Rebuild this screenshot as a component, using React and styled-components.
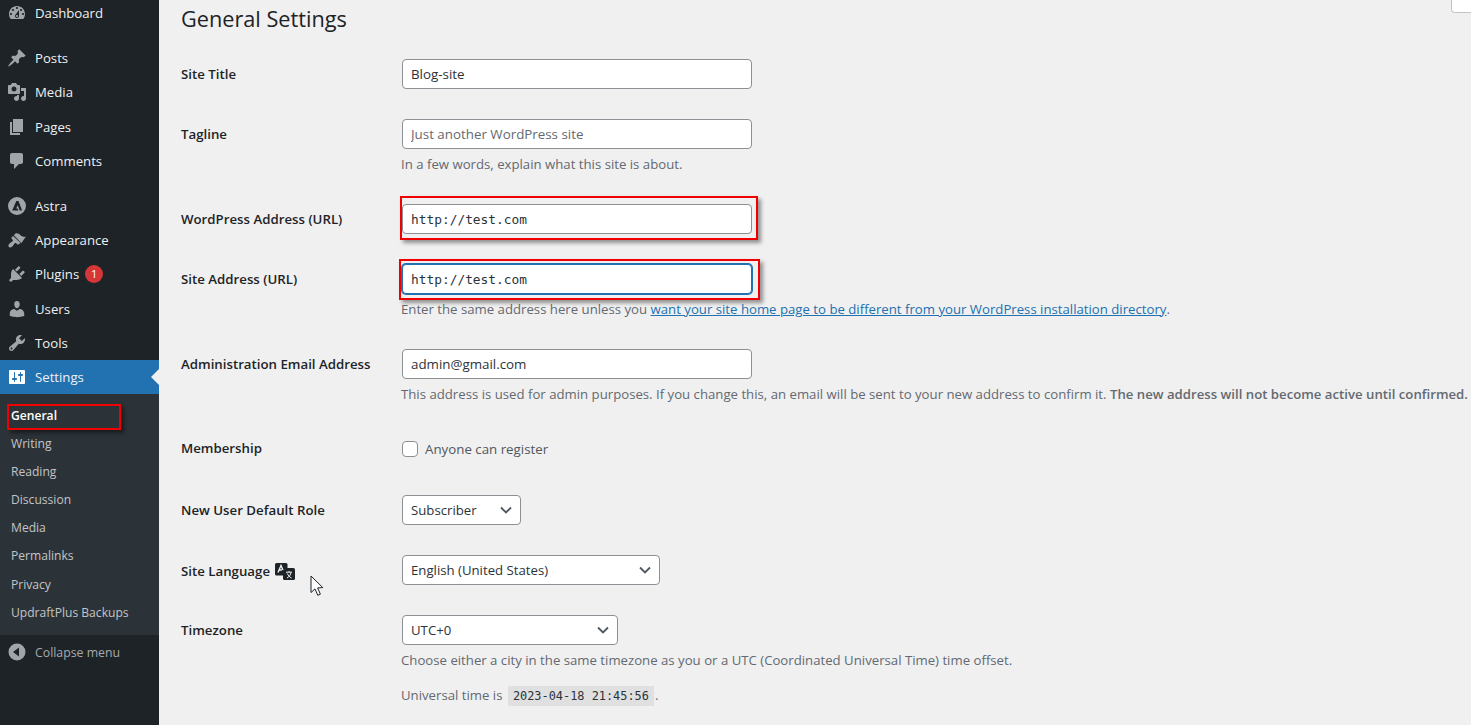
import styled, { createGlobalStyle } from "styled-components";

const GlobalStyle = createGlobalStyle`
  html, body {
    margin: 0;
    height: 725px;
    overflow: hidden;
    background: #f0f0f0;
    font-family: "Open Sans", "Noto Sans", sans-serif;
  }
  * { box-sizing: border-box; }
`;

const Page = styled.div`
  display: flex;
  height: 725px;
  overflow: hidden;
  position: relative;
`;

const Sidebar = styled.nav`
  width: 159px;
  flex-shrink: 0;
  background: #1d2327;
  overflow: hidden;
`;

const MenuList = styled.div`
  margin-top: -4.2px;
`;

const MenuRow = styled.div`
  height: 34.3px;
  display: flex;
  align-items: center;
  position: relative;
  padding-left: 7px;
  gap: 8px;
  font-size: 13.2px;
  color: #f0f0f1;
  background: ${({ $active }) => ($active ? "#2271b1" : "transparent")};
  margin-top: ${({ $gap }) => ($gap ? "10.7px" : "0")};
  svg { flex-shrink: 0; fill: ${({ $active }) => ($active ? "#fff" : "#a0a5aa")}; }
`;

const ActiveArrow = styled.span`
  position: absolute;
  right: 0;
  top: 50%;
  margin-top: -8px;
  border: 8px solid transparent;
  border-right-color: #f0f0f0;
  border-left-width: 0;
`;

const Badge = styled.span`
  width: 18px;
  height: 18px;
  border-radius: 50%;
  background: #d63638;
  color: #fff;
  font-size: 11px;
  line-height: 18px;
  text-align: center;
  margin-left: -2px;
`;

const SubMenu = styled.div`
  background: #2c3338;
  padding: 7.3px 0 8px 11px;
`;

const SubItem = styled.div`
  height: 28.15px;
  line-height: 28px;
  font-size: 12.1px;
  color: ${({ $current }) => ($current ? "#fff" : "#c3c4c7")};
  font-weight: ${({ $current }) => ($current ? 600 : 400)};
  position: relative;
`;

const SubMark = styled.span`
  position: absolute;
  left: -4px;
  top: 2px;
  width: 114px;
  height: 26px;
  border: 2.5px solid #f00000;
  box-shadow: 3px 3px 4px rgba(0, 0, 0, 0.45);
`;

const CollapseRow = styled(MenuRow)`
  font-size: 12.3px;
  color: #a7aaad;
`;

const Main = styled.main`
  flex: 1;
  padding-left: 22px;
  min-width: 0;
`;

const Heading = styled.h1`
  margin: 0 0 8px;
  height: 36px;
  line-height: 38px;
  font-size: 21.7px;
  font-weight: 400;
  color: #1d2327;
`;

const Row = styled.div`
  display: grid;
  grid-template-columns: 221px 1fr;
  padding: 15px 0;
`;

const Label = styled.div`
  display: flex;
  align-items: center;
  height: 30px;
  gap: 5px;
  padding-top: ${({ $down }) => ($down ? "2px" : "0")};
  padding-bottom: ${({ $up }) => ($up ? "2px" : "0")};
  font-size: 13.25px;
  font-weight: 600;
  color: #1d2327;
`;

const Control = styled.div`
  min-width: 0;
  font-size: 13.3px;
  color: #2c3338;
`;

const Wrap = styled.div`
  position: relative;
  width: ${({ $w }) => $w}px;
  height: 30px;
`;

const Input = styled.input`
  display: block;
  width: 350px;
  height: 30px;
  padding: 0 8px;
  background: #fff;
  border: 1px solid ${({ $focus }) => ($focus ? "#2271b1" : "#8c8f94")};
  border-radius: 4px;
  box-shadow: ${({ $focus }) => ($focus ? "0 0 0 1px #2271b1" : "none")};
  outline: none;
  color: #2c3338;
  font-family: ${({ $mono }) => ($mono ? '"DejaVu Sans Mono", monospace' : "inherit")};
  font-size: ${({ $mono }) => ($mono ? "12.85px" : "13.35px")};
  &::placeholder { color: #646970; opacity: 1; }
`;

const Mark = styled.span`
  position: absolute;
  border: 2.5px solid #f00000;
  box-shadow: 3px 3px 4px rgba(0, 0, 0, 0.4);
  pointer-events: none;
  left: ${({ $l }) => $l}px;
  right: ${({ $r }) => $r}px;
  top: ${({ $t }) => $t}px;
  bottom: ${({ $b }) => $b}px;
`;

const Select = styled.select`
  appearance: none;
  display: block;
  width: 100%;
  height: 30px;
  padding: 0 24px 0 8px;
  background: #fff;
  border: 1px solid #8c8f94;
  border-radius: 4px;
  color: #2c3338;
  font-family: inherit;
  font-size: 13.2px;
`;

const Chevron = styled.svg`
  position: absolute;
  right: 8px;
  top: 10px;
  pointer-events: none;
`;

const Desc = styled.p`
  margin: ${({ $big }) => ($big ? "15px" : "5px")} 0 0 -1px;
  line-height: 20px;
  font-size: 13.2px;
  color: #646970;
  white-space: nowrap;
`;

const Link = styled.a`
  color: #2271b1;
  text-decoration: underline;
`;

const Strong = styled.strong`
  font-weight: 600;
`;

const CheckLine = styled.label`
  display: flex;
  align-items: flex-start;
  height: 31px;
  padding-top: 5px;
  gap: 7px;
  line-height: 20px;
  color: #50575e;
`;

const Checkbox = styled.span`
  width: 16px;
  height: 16px;
  margin-top: 2px;
  background: #fff;
  border: 1px solid #8c8f94;
  border-radius: 4px;
`;

const Code = styled.code`
  display: inline-block;
  height: 20px;
  line-height: 20px;
  padding: 0 5px;
  margin: 0 1px 0 2px;
  background: #e0e0e0;
  color: #2c3338;
  font-family: "DejaVu Sans Mono", monospace;
  font-size: 11.9px;
`;

const HelpTab = styled.div`
  position: absolute;
  right: 0;
  top: -2px;
  width: 20px;
  height: 15px;
  background: #fff;
  border-left: 1px solid #c3c4c7;
  border-bottom: 1px solid #c3c4c7;
  border-bottom-left-radius: 4px;
`;

const Cursor = styled.svg`
  position: absolute;
  left: 310px;
  top: 575px;
`;

const Icon = ({ d }) => (
  <svg width="20" height="20" viewBox="0 0 20 20">
    <path d={d} />
  </svg>
);

const icons = {
  dashboard:
    "M3.76 16h12.48c1.1-1.37 1.76-3.11 1.76-5 0-4.42-3.58-8-8-8s-8 3.58-8 8c0 1.89.66 3.63 1.76 5zM10 4c.55 0 1 .45 1 1s-.45 1-1 1-1-.45-1-1 .45-1 1-1zM6 6c.55 0 1 .45 1 1s-.45 1-1 1-1-.45-1-1 .45-1 1-1zm8 0c.55 0 1 .45 1 1s-.45 1-1 1-1-.45-1-1 .45-1 1-1zm-5.37 5.55L12 7v6c0 1.1-.9 2-2 2s-2-.9-2-2c0-.57.24-1.08.63-1.45zM4 10c.55 0 1 .45 1 1s-.45 1-1 1-1-.45-1-1 .45-1 1-1zm12 0c.55 0 1 .45 1 1s-.45 1-1 1-1-.45-1-1 .45-1 1-1zm-5 3c0-.55-.45-1-1-1s-1 .45-1 1 .45 1 1 1 1-.45 1-1z",
  posts:
    "M10.44 3.02l1.82-1.82 6.36 6.35-1.83 1.82c-1.05-.68-2.48-.57-3.41.36l-.75.75c-.92.93-1.04 2.35-.35 3.41l-1.83 1.82-2.41-2.41-2.8 2.79c-.42.42-3.38 2.71-3.8 2.29s1.86-3.39 2.28-3.81l2.79-2.79L4.1 9.36l1.83-1.82c1.05.69 2.48.57 3.4-.36l.75-.75c.93-.92 1.05-2.35.36-3.41z",
  media:
    "M13 11V4c0-.55-.45-1-1-1h-1.67L9 1H5L3.67 3H2c-.55 0-1 .45-1 1v7c0 .55.45 1 1 1h10c.55 0 1-.45 1-1zM7 4.5c1.38 0 2.5 1.12 2.5 2.5S8.38 9.5 7 9.5 4.5 8.38 4.5 7 5.62 4.5 7 4.5zM14 6h5v10.5c0 1.38-1.12 2.5-2.5 2.5S14 17.88 14 16.5s1.12-2.5 2.5-2.5c.17 0 .34.02.5.05V9h-3V6zm-4 8.05V13h2v3.5c0 1.38-1.12 2.5-2.5 2.5S7 17.88 7 16.5 8.12 14 9.5 14c.17 0 .34.02.5.05z",
  pages: "M6 15V2h10v13H6zm-1 1h8v2H3V5h2v11z",
  comments:
    "M5 2h9c1.1 0 2 .9 2 2v7c0 1.1-.9 2-2 2h-2l-5 5v-5H5c-1.1 0-2-.9-2-2V4c0-1.1.9-2 2-2z",
  astra:
    "M10 1a9 9 0 1 0 0 18 9 9 0 0 0 0-18zM9.3 5h2.2l3.6 9.4h-2.4l-1.9-5.2-1.7 3.4h1.6l.7 1.8H5.2z",
  appearance:
    "M19 6.6c-1.9.7-3.2.2-4.4-.5-1.3-.8-1.7-1.6-2.9-2.3-1.2-.7-2.6-.8-3.2-.2L6.8 5.3l7.6 7.6zM6 6L4.7 7.3c-.4.4-.4 1 0 1.4l1 1c.4.4.4 1 0 1.4-.6.6-1.4 1.1-2.2 1.7-.4.3-.7.5-1 .8-1.2 1.2-1.4 2.6-.6 3.4.8.8 2.2.6 3.4-.6.3-.3.6-.7.8-1 .6-.8 1.1-1.6 1.7-2.2.4-.4 1-.4 1.4 0l1 1c.4.4 1 .4 1.4 0l2.1-1.1z",
  plugins:
    "M13.11 4.36L9.87 7.6 8 5.73l3.24-3.24c.35-.34 1.05-.2 1.56.32.52.51.66 1.21.31 1.55zm-8 1.77l.91-1.12 9.01 9.01-1.19.84c-.71.71-2.63 1.16-3.82 1.16H6.14L4.9 17.26c-.59.59-1.54.59-2.12 0-.59-.58-.59-1.53 0-2.12l1.24-1.24v-3.88c0-1.13.4-3.19 1.09-3.89zm7.26 3.97l3.24-3.24c.34-.35 1.04-.21 1.55.31.52.51.66 1.21.31 1.55l-3.24 3.25z",
  users:
    "M10 9.25c-2.27 0-2.73-3.44-2.73-3.44C7 4.02 7.82 2 9.97 2c2.16 0 2.98 2.02 2.71 3.81 0 0-.41 3.44-2.68 3.44zm0 2.57L12.72 10c2.39 0 4.52 2.33 4.52 4.53v2.49s-3.65 1.13-7.24 1.13c-3.65 0-7.24-1.13-7.24-1.13v-2.49c0-2.25 1.94-4.48 4.47-4.48z",
  tools:
    "M16.68 9.77c-1.34 1.34-3.3 1.67-4.95.99l-5.41 6.52c-.99.99-2.59.99-3.58 0s-.99-2.59 0-3.57l6.52-5.42c-.68-1.65-.35-3.61.99-4.95 1.28-1.28 3.12-1.62 4.72-1.06l-2.89 2.89 2.82 2.82 2.86-2.87c.53 1.58.18 3.39-1.08 4.65zM3.81 16.21c.4.39 1.04.39 1.43 0 .4-.4.4-1.04 0-1.43-.39-.4-1.03-.4-1.43 0-.39.39-.39 1.03 0 1.43z",
  settings:
    "M18 16V4c0-.55-.45-1-1-1H3c-.55 0-1 .45-1 1v12c0 .55.45 1 1 1h14c.55 0 1-.45 1-1zM8 11h1c.55 0 1 .45 1 1s-.45 1-1 1H8v1.5c0 .28-.22.5-.5.5s-.5-.22-.5-.5V13H6c-.55 0-1-.45-1-1s.45-1 1-1h1V5.5c0-.28.22-.5.5-.5s.5.22.5.5V11zm5-2h-1c-.55 0-1-.45-1-1s.45-1 1-1h1V5.5c0-.28.22-.5.5-.5s.5.22.5.5V7h1c.55 0 1 .45 1 1s-.45 1-1 1h-1v5.5c0 .28-.22.5-.5.5s-.5-.22-.5-.5V9z",
  collapse:
    "M10 1.5a8.5 8.5 0 1 1 0 17 8.5 8.5 0 0 1 0-17zM12 14.5v-9L6 10z",
};

const menu = [
  { name: "Dashboard", icon: "dashboard" },
  { name: "Posts", icon: "posts", gap: true },
  { name: "Media", icon: "media" },
  { name: "Pages", icon: "pages" },
  { name: "Comments", icon: "comments" },
  { name: "Astra", icon: "astra", gap: true },
  { name: "Appearance", icon: "appearance" },
  { name: "Plugins", icon: "plugins", badge: 1 },
  { name: "Users", icon: "users" },
  { name: "Tools", icon: "tools" },
];

const subItems = ["Writing", "Reading", "Discussion", "Media", "Permalinks", "Privacy", "UpdraftPlus Backups"];

const ChevronDown = () => (
  <Chevron width="14" height="10" viewBox="0 0 14 10" fill="none" stroke="#50575e" strokeWidth="1.8">
    <path d="M2 2.5l5 5 5-5" />
  </Chevron>
);

const TranslateIcon = () => (
  <svg width="20" height="17" viewBox="0 0 20 17">
    <rect x="0" y="0" width="12.5" height="12.5" rx="1.5" fill="#1d2327" />
    <rect x="8" y="5" width="12" height="12" rx="1.5" fill="#1d2327" />
    <path d="M3 9.5l3-7 2 4.5M4.2 7h2.6" fill="none" stroke="#f0f0f0" strokeWidth="1.4" />
    <path d="M11 9.2h6M14 8v1.2M12 15c2.2-1 3.6-3 4-5.8M12.4 10.5c.8 2 2.2 3.6 4.2 4.5" fill="none" stroke="#f0f0f0" strokeWidth="1" />
  </svg>
);

function SelectBox({ width, value }) {
  return (
    <Wrap $w={width}>
      <Select defaultValue={value}>
        <option>{value}</option>
      </Select>
      <ChevronDown />
    </Wrap>
  );
}

export default function App() {
  return (
    <Page>
      <GlobalStyle />
      <Sidebar>
        <MenuList>
          {menu.map((item) => (
            <MenuRow key={item.name} $gap={item.gap}>
              <Icon d={icons[item.icon]} />
              {item.name}
              {item.badge && <Badge>{item.badge}</Badge>}
            </MenuRow>
          ))}
          <MenuRow $active>
            <Icon d={icons.settings} />
            Settings
            <ActiveArrow />
          </MenuRow>
          <SubMenu>
            <SubItem $current>
              General
              <SubMark />
            </SubItem>
            {subItems.map((name) => (
              <SubItem key={name}>{name}</SubItem>
            ))}
          </SubMenu>
          <CollapseRow>
            <Icon d={icons.collapse} />
            Collapse menu
          </CollapseRow>
        </MenuList>
      </Sidebar>

      <Main>
        <Heading>General Settings</Heading>

        <Row>
          <Label>Site Title</Label>
          <Control>
            <Input defaultValue="Blog-site" />
          </Control>
        </Row>

        <Row>
          <Label>Tagline</Label>
          <Control>
            <Input placeholder="Just another WordPress site" />
            <Desc>In a few words, explain what this site is about.</Desc>
          </Control>
        </Row>

        <Row>
          <Label>WordPress Address (URL)</Label>
          <Control>
            <Wrap $w={350}>
              <Input $mono defaultValue="http://test.com" />
              <Mark $l={-2} $r={-6} $t={-8} $b={-6} />
            </Wrap>
          </Control>
        </Row>

        <Row>
          <Label>Site Address (URL)</Label>
          <Control>
            <Wrap $w={350}>
              <Input $mono $focus defaultValue="http://test.com" />
              <Mark $l={-3} $r={-8} $t={-5} $b={-6} />
            </Wrap>
            <Desc>
              Enter the same address here unless you{" "}
              <Link>want your site home page to be different from your WordPress installation directory</Link>.
            </Desc>
          </Control>
        </Row>

        <Row>
          <Label>Administration Email Address</Label>
          <Control>
            <Input defaultValue="admin@gmail.com" />
            <Desc>
              This address is used for admin purposes. If you change this, an email will be sent to your new address to
              confirm it. <Strong>The new address will not become active until confirmed.</Strong>
            </Desc>
          </Control>
        </Row>

        <Row>
          <Label $up>Membership</Label>
          <Control>
            <CheckLine>
              <Checkbox />
              Anyone can register
            </CheckLine>
          </Control>
        </Row>

        <Row>
          <Label>New User Default Role</Label>
          <Control>
            <SelectBox width={119} value="Subscriber" />
          </Control>
        </Row>

        <Row>
          <Label $down>
            Site Language <TranslateIcon />
          </Label>
          <Control>
            <SelectBox width={258} value="English (United States)" />
          </Control>
        </Row>

        <Row>
          <Label>Timezone</Label>
          <Control>
            <SelectBox width={216} value="UTC+0" />
            <Desc>Choose either a city in the same timezone as you or a UTC (Coordinated Universal Time) time offset.</Desc>
            <Desc $big>
              Universal time is <Code>2023-04-18 21:45:56</Code>.
            </Desc>
          </Control>
        </Row>
      </Main>

      <HelpTab />
      <Cursor width="14" height="22" viewBox="0 0 14 22">
        <path d="M1 1v16.5l4-3.6 2.8 6.4 2.6-1.1-2.8-6.3 5.2-.3z" fill="#fff" stroke="#1d2327" strokeWidth="1" />
      </Cursor>
    </Page>
  );
}
